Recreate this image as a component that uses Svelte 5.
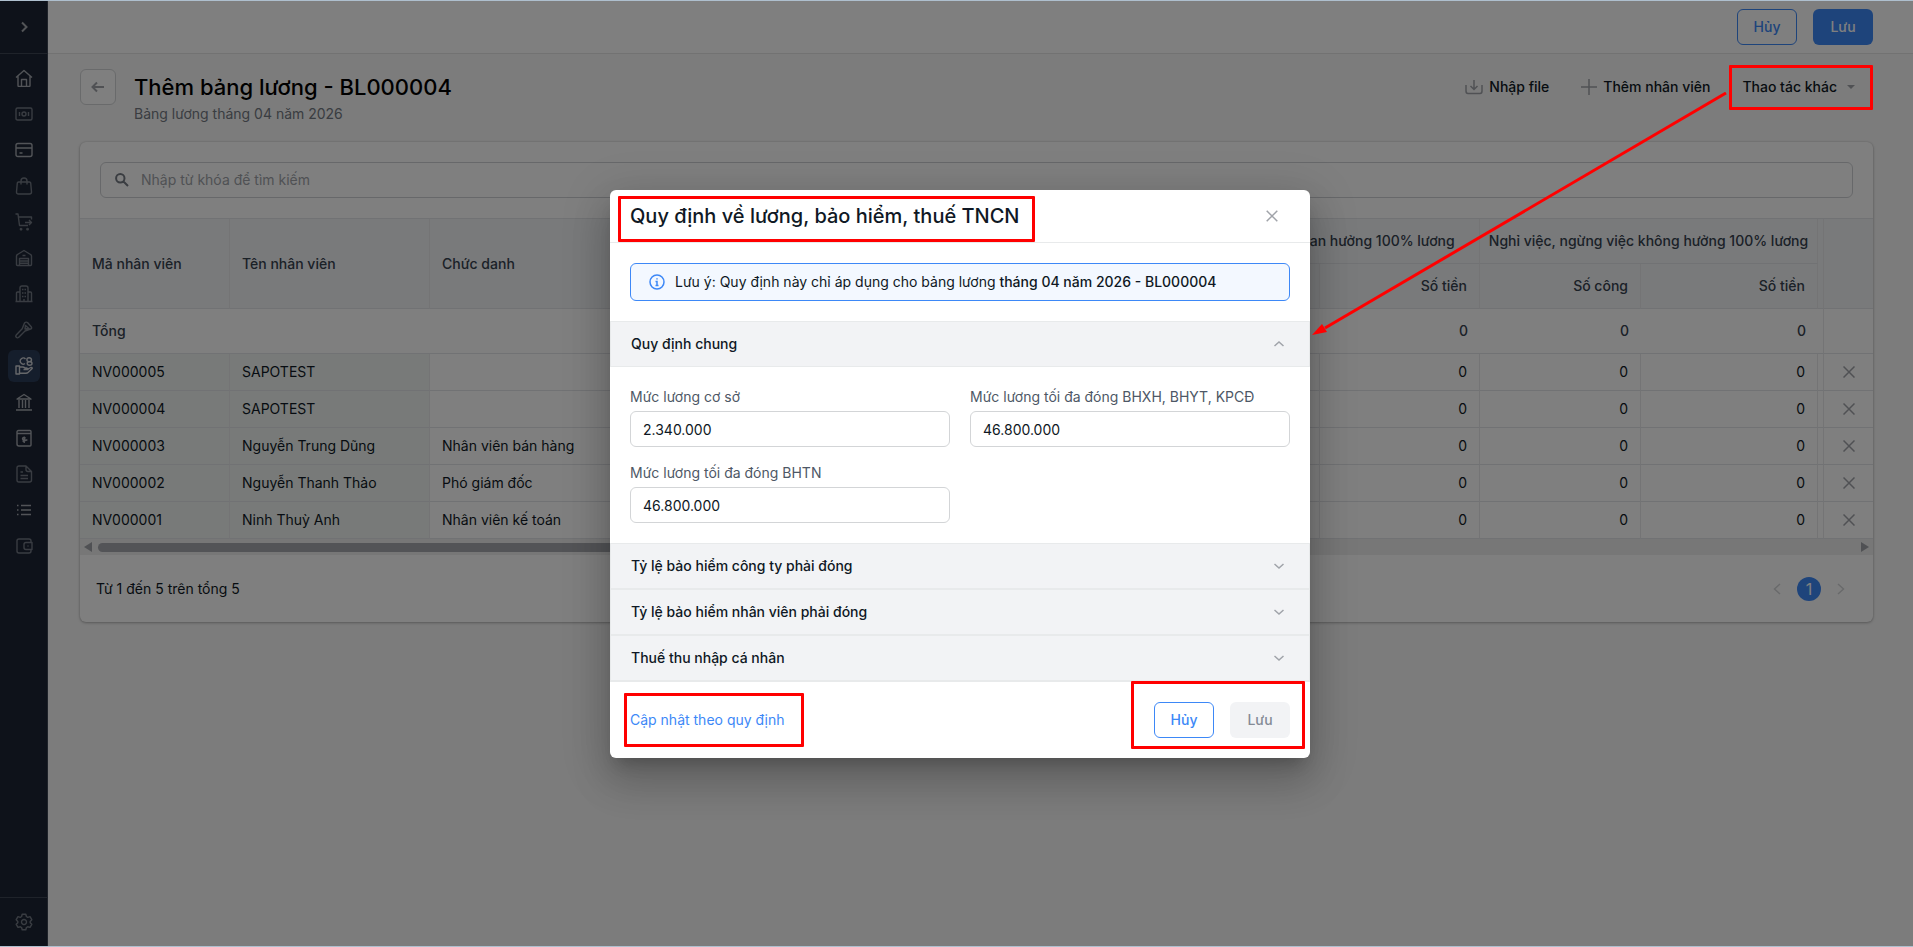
<script lang="ts">
  interface NavItem {
    label: string;
    d: string;
    strong?: boolean;
    active?: boolean;
  }

  interface Employee {
    code: string;
    name: string;
    title: string;
  }

  const navItems: NavItem[] = [
    { label: 'Trang chủ', strong: true, d: 'M1 8.5 9 1.5l8 7M3 7v9.500q0 1 1 1h10q1 0 1-1V7M6.500 17v-6.500h5V17' },
    { label: 'Thu chi', d: 'M2.500 3h13q1.500 0 1.500 1.500v9q0 1.500-1.500 1.500h-13q-1.500 0-1.500-1.500v-9q0-1.500 1.500-1.500zM4.500 7v4M13.500 7v4M11 9a2 2 0 1 1-4 0a2 2 0 1 1 4 0' },
    { label: 'Thẻ', strong: true, d: 'M3 2.500h12q2 0 2 2v9q0 2-2 2h-12q-2 0-2-2v-9q0-2 2-2zM1 7h16M4.500 12h3' },
    { label: 'Bán hàng', d: 'M3.500 5h11q1 0 1.200 1l.8 9q0 2-2 2h-11q-2 0-2-2l.8-9q.2-1 1.200-1zM6 7.500V4q0-3 3-3t3 3v3.500' },
    { label: 'Mua hàng', d: 'M.5 1h2.500l1.500 11.500h8.500M3.500 4h13v2.500M10 9.500h6.500M14 7l2.500 2.500L14 12M6 15.500a.7.7 0 1 0 .1 0M12.500 15.500a.7.7 0 1 0 .1 0' },
    { label: 'Kho', d: 'M2.500 5.500 9 1.500l6.500 4q1 .5 1 1.500v8.500q0 1-1 1h-13q-1 0-1-1V7q0-1 1-1.500zM4.500 16.500V9.500h9v7M4.500 12h9M4.500 14.300h9M7.500 6.500h3' },
    { label: 'Tài sản', d: 'M.5 16.500h17M5 16.500V3q0-2 2-2h4q2 0 2 2v13.500M5 7H2.500q-1 0-1 1v8.500M13 7h2.500q1 0 1 1v8.500M7 4.500h1.500M9.500 4.500h1.500M7 8h1.500M9.500 8h1.500M7 11.500h1.500M9.500 11.500h1.500M9 14v2.500' },
    { label: 'Công cụ', d: 'M9.500 2q1.500-1.500 3-.5l3.500 4q1.500 2-.5 2.500l-5.500 2-6.500 6.500q-1.200.8-2.200-.2t-.1-2.200l6-6.300zM10.500 4.500l3.500 3-4 .5z' },
    { label: 'Tiền lương', active: true, d: 'M1 9h3.500v8H1zM4.500 10h3q1.500 0 2.500 1h1.500q1.500.2 1.500 1.500H8.500M13 12l2.800-1.500q1.500-.2 1.400 1l-4.200 4q-.7.7-2 .7H4.500M10 6.500a3 3 0 1 1 .5-4.500M16.500 2.800a2.300 2 0 1 0-4.600 0a2.300 2 0 1 0 4.600 0M17 6.300a2.400 2 0 1 1-4.800 0q0-1.600 2.400-1.600t2.400 1.600' },
    { label: 'Ngân hàng', strong: true, d: 'M2 6 9 1.500 16 6zM4 7v8M7.500 7v8M10.500 7v8M14 7v8M1 17h16' },
    { label: 'Sổ quỹ', strong: true, d: 'M2 4.500V15q0 2 2 2h11q1 0 1-1V4.500zM2 4.500V3q0-1.500 1.500-1.500H15q1 0 1 1v2M10.700 9q-3.200-1-3.200.7t3.300 1.300-3.300 1.300M9.200 7.500v6.500' },
    { label: 'Chứng từ', d: 'M4 1h7l5.500 5.500V15q0 2-2 2H4q-2 0-2-2V3q0-2 2-2zM11 1v3.500q0 2 2 2h3.500M5.500 7h2.500M5.500 10.500h7.500M5.500 13.500h7.500' },
    { label: 'Danh mục', strong: true, d: 'M2 4.500h1.500M6 4.500h10M2 9h1.500M6 9h10M2 13.500h1.500M6 13.500h10' },
    { label: 'Ví', d: 'M16 5.500V4q0-2-2-2H4Q2 2 2 4v10q0 2 2 2h10q2 0 2-2v-1.500M17 5.500h-6q-2 0-2 2v3q0 2 2 2h6zM12.500 9h1' }
  ];

  const employees: Employee[] = [
    { code: 'NV000005', name: 'SAPOTEST', title: '' },
    { code: 'NV000004', name: 'SAPOTEST', title: '' },
    { code: 'NV000003', name: 'Nguyễn Trung Dũng', title: 'Nhân viên bán hàng' },
    { code: 'NV000002', name: 'Nguyễn Thanh Thảo', title: 'Phó giám đốc' },
    { code: 'NV000001', name: 'Ninh Thuỳ Anh', title: 'Nhân viên kế toán' }
  ];

  const closedSections = [
    'Tỷ lệ bảo hiểm công ty phải đóng',
    'Tỷ lệ bảo hiểm nhân viên phải đóng',
    'Thuế thu nhập cá nhân'
  ];

  let keyword = $state('');
  let generalOpen = $state(true);
  let baseSalary = $state('2.340.000');
  let maxSocial = $state('46.800.000');
  let maxUnemployment = $state('46.800.000');
</script>

{#snippet chevron(up: boolean)}
  <svg class="chevron" class:up width="12" height="12" viewBox="0 0 12 12"><path d="M1.500 4l4.500 4 4.500-4" /></svg>
{/snippet}

<div class="app">
  <aside class="sidebar">
    <button class="side-toggle" aria-label="Mở rộng menu">
      <svg width="12" height="12" viewBox="0 0 12 12"><path d="M4 1.500L8.500 6 4 10.500" /></svg>
    </button>
    <nav>
      {#each navItems as item}
        <a href="#{item.label}" class="nav-item" class:strong={item.strong} class:active={item.active} aria-label={item.label}>
          <svg width="18" height="18" viewBox="0 0 18 18"><path d={item.d} /></svg>
        </a>
      {/each}
    </nav>
    <div class="side-foot">
      <a href="#cau-hinh" class="nav-item" aria-label="Cấu hình">
        <svg width="18" height="18" viewBox="0 0 18 18">
          <path d="M7.200 1.200h3.600l.6 2.300 1.300.8 2.300-.7 1.800 3.100-1.600 1.700v1.300l1.600 1.600-1.800 3.100-2.300-.6-1.300.7-.6 2.300H7.200l-.6-2.300-1.300-.7-2.300.6-1.800-3.100 1.600-1.600V8.400L1.200 6.700 3 3.600l2.300.7 1.300-.8zM11.500 9a2.500 2.500 0 1 1-5 0a2.500 2.500 0 1 1 5 0" />
        </svg>
      </a>
    </div>
  </aside>

  <div class="content">
    <div class="topbar">
      <button class="btn outline">Hủy</button>
      <button class="btn primary">Lưu</button>
    </div>

    <main>
      <header class="page-head">
        <button class="back" aria-label="Quay lại">
          <svg width="14" height="12" viewBox="0 0 14 12"><path d="M13 6H2M6 1.500L1.500 6 6 10.500" /></svg>
        </button>
        <div class="titles">
          <h1>Thêm bảng lương - BL000004</h1>
          <p>Bảng lương tháng 04 năm 2026</p>
        </div>
        <div class="actions">
          <button class="action">
            <svg width="18" height="16" viewBox="0 0 18 16"><path d="M1 6v6q0 2.500 2 2.500h12q2 0 2-2.500V6M9 1v9M5.500 7L9 10.500 12.500 7" /></svg>
            Nhập file
          </button>
          <button class="action">
            <svg width="16" height="16" viewBox="0 0 16 16"><path d="M8 0v16M0 8h16" /></svg>
            Thêm nhân viên
          </button>
          <button class="action more">
            Thao tác khác
            <svg class="caret" width="8" height="4" viewBox="0 0 8 4"><path d="M0 0h8L4 4z" /></svg>
          </button>
        </div>
      </header>

      <section class="card">
        <label class="search">
          <svg width="14" height="14" viewBox="0 0 14 14"><path d="M9.500 5.300a4.200 4.200 0 1 1-8.400 0a4.200 4.200 0 1 1 8.400 0M8.500 8.500L13 13" /></svg>
          <input type="text" aria-label="Tìm kiếm" placeholder="Nhập từ khóa để tìm kiếm" bind:value={keyword} />
        </label>

        <table>
          <colgroup>
            <col class="c-code" />
            <col class="c-name" />
            <col />
            <col class="c-days-prev" />
            <col class="c-amount-prev" />
            <col class="c-days" />
            <col class="c-amount" />
            <col class="c-gap" />
            <col class="c-remove" />
          </colgroup>
          <thead>
            <tr>
              <th rowspan="2">Mã nhân viên</th>
              <th rowspan="2">Tên nhân viên</th>
              <th rowspan="2">Chức danh</th>
              <th colspan="2" class="group">Thời gian hưởng 100% lương</th>
              <th colspan="2" class="group">Nghỉ việc, ngừng việc không hưởng 100% lương</th>
              <th rowspan="2" class="gap"></th>
              <th rowspan="2"></th>
            </tr>
            <tr>
              <th class="num">Số công</th>
              <th class="num">Số tiền</th>
              <th class="num">Số công</th>
              <th class="num">Số tiền</th>
            </tr>
          </thead>
          <tbody>
            <tr class="total">
              <td colspan="3">Tổng</td>
              <td class="num">0</td>
              <td class="num">0</td>
              <td class="num">0</td>
              <td class="num">0</td>
              <td class="gap"></td>
              <td></td>
            </tr>
            {#each employees as employee (employee.code)}
              <tr>
                <td class="pinned">{employee.code}</td>
                <td class="pinned">{employee.name}</td>
                <td>{employee.title}</td>
                <td class="num">0</td>
                <td class="num">0</td>
                <td class="num">0</td>
                <td class="num">0</td>
                <td class="gap"></td>
                <td class="remove">
                  <button aria-label="Xóa {employee.code}">
                    <svg width="12" height="12" viewBox="0 0 12 12"><path d="M.5.5l11 11M11.500.5l-11 11" /></svg>
                  </button>
                </td>
              </tr>
            {/each}
          </tbody>
        </table>

        <div class="scrollbar">
          <svg width="8" height="10" viewBox="0 0 8 10"><path d="M8 0v10L0 5z" /></svg>
          <div class="track"><div class="thumb"></div></div>
          <svg width="8" height="10" viewBox="0 0 8 10"><path d="M0 0v10l8-5z" /></svg>
        </div>

        <footer class="card-foot">
          <span>Từ 1 đến 5 trên tổng 5</span>
          <div class="pager">
            <button aria-label="Trang trước"><svg width="8" height="12" viewBox="0 0 8 12"><path d="M7 1L1.500 6 7 11" /></svg></button>
            <button class="current">1</button>
            <button aria-label="Trang sau"><svg width="8" height="12" viewBox="0 0 8 12"><path d="M1 1l5.500 5L1 11" /></svg></button>
          </div>
        </footer>
      </section>
    </main>
  </div>

  <div class="overlay">
    <div class="modal" role="dialog" aria-modal="true" aria-labelledby="modal-title">
      <header class="modal-head">
        <h2 id="modal-title">Quy định về lương, bảo hiểm, thuế TNCN</h2>
        <button class="close" aria-label="Đóng">
          <svg width="12" height="12" viewBox="0 0 12 12"><path d="M.7.7l10.600 10.600M11.300.7L.7 11.300" /></svg>
        </button>
        <span class="mark mark-title"></span>
      </header>

      <div class="notice">
        <svg width="16" height="16" viewBox="0 0 16 16">
          <circle cx="8" cy="8" r="7" />
          <path d="M6.500 7.500H8v4M6.500 11.500h3M8 4.300v1.200" />
        </svg>
        <p>Lưu ý: Quy định này chỉ áp dụng cho bảng lương <strong>tháng 04 năm 2026 - BL000004</strong></p>
      </div>

      <button class="section" aria-expanded={generalOpen} onclick={() => (generalOpen = !generalOpen)}>
        Quy định chung
        {@render chevron(generalOpen)}
      </button>
      {#if generalOpen}
        <div class="fields">
          <label>
            <span>Mức lương cơ sở</span>
            <input type="text" bind:value={baseSalary} />
          </label>
          <label>
            <span>Mức lương tối đa đóng BHXH, BHYT, KPCĐ</span>
            <input type="text" bind:value={maxSocial} />
          </label>
          <label>
            <span>Mức lương tối đa đóng BHTN</span>
            <input type="text" bind:value={maxUnemployment} />
          </label>
        </div>
      {/if}
      {#each closedSections as section}
        <button class="section" aria-expanded="false">
          {section}
          {@render chevron(false)}
        </button>
      {/each}

      <footer class="modal-foot">
        <a href="#cap-nhat">Cập nhật theo quy định<span class="mark mark-link"></span></a>
        <div class="modal-buttons">
          <button class="btn outline">Hủy</button>
          <button class="btn disabled" disabled>Lưu</button>
          <span class="mark mark-buttons"></span>
        </div>
      </footer>
    </div>

    <!-- guide arrow from the "Thao tác khác" menu to the dialog -->
    <div class="mark mark-more"></div>
    <svg class="arrow" width="416" height="244" viewBox="0 0 416 244">
      <path d="M415 1L14 236" />
      <polygon points="1,243 11,232 16,240" />
    </svg>
  </div>
</div>

<style>
  :global(body) {
    margin: 0;
  }
  .app,
  .app :global(*) {
    box-sizing: border-box;
  }
  .app {
    position: relative;
    display: flex;
    min-height: 100vh;
    border-top: 1px solid #aebfce;
    border-bottom: 1px solid #aebfce;
    background: #f8f8f8;
    color: #0f1824;
    font-family: Inter, 'Noto Sans', sans-serif;
    font-size: 14px;
    line-height: 20px;
  }
  button,
  input {
    font: inherit;
    color: inherit;
  }
  button {
    padding: 0;
    border: 0;
    background: none;
    cursor: pointer;
  }
  svg {
    flex: none;
    fill: none;
    stroke: currentColor;
  }
  h1,
  h2,
  p {
    margin: 0;
    font-weight: 400;
  }

  .sidebar {
    display: flex;
    flex-direction: column;
    width: 48px;
    flex: none;
    background: #1c2534;
    border-right: 1px solid #3e4654;
  }
  .side-toggle {
    display: flex;
    align-items: center;
    justify-content: center;
    height: 53px;
    border-bottom: 1px solid #3e4654;
    color: #a5a8ae;
  }
  .side-toggle svg {
    stroke-width: 2;
  }
  nav {
    display: flex;
    flex-direction: column;
    gap: 4px;
    flex: 1;
    padding: 8px 7px 8px 8px;
  }
  .nav-item {
    display: flex;
    align-items: center;
    justify-content: center;
    width: 32px;
    height: 32px;
    border-radius: 6px;
    color: #737984;
  }
  .nav-item svg {
    stroke-width: 1.4;
    stroke-linejoin: round;
  }
  .nav-item.strong {
    color: #a5a9b0;
  }
  .nav-item.active {
    background: #2b3c58;
    color: #cdd0d5;
  }
  .side-foot {
    padding: 8px;
    border-top: 1px solid #3e4654;
  }

  .content {
    flex: 1;
    min-width: 0;
  }
  .topbar {
    display: flex;
    align-items: center;
    justify-content: flex-end;
    gap: 16px;
    height: 53px;
    padding: 0 40px;
    background: #fff;
    border-bottom: 1px solid #e4e4e4;
  }
  .btn {
    width: 60px;
    height: 36px;
    border-radius: 6px;
    font-weight: 500;
  }
  .btn.outline {
    border: 1px solid #3d88f7;
    background: #fff;
    color: #3d88f7;
  }
  .btn.primary {
    background: #3d88f7;
    color: #fff;
  }
  .btn.disabled {
    background: #f2f3f5;
    color: #858b95;
  }

  main {
    padding: 15px 40px 24px 32px;
  }
  .page-head {
    display: flex;
    margin-bottom: 19px;
  }
  .back {
    display: flex;
    align-items: center;
    justify-content: center;
    width: 36px;
    height: 36px;
    border: 1px solid #d3d5d7;
    border-radius: 6px;
    background: #fff;
    color: #a0a3a9;
  }
  .back svg {
    stroke-width: 2;
  }
  .titles {
    flex: 1;
    margin-left: 18px;
  }
  h1 {
    font-size: 22px;
    font-weight: 500;
    line-height: 36px;
    color: #000;
  }
  .titles p {
    line-height: 18px;
    color: #747a83;
  }
  .actions {
    display: flex;
    align-items: center;
    gap: 32px;
    height: 36px;
    padding-right: 18px;
  }
  .action {
    display: flex;
    align-items: center;
    gap: 6px;
    font-weight: 500;
  }
  .action svg {
    color: #a0a3a9;
    stroke-width: 1.5;
  }
  .action.more {
    gap: 10px;
  }
  .action .caret {
    fill: #a0a3a9;
    stroke: none;
  }

  .card {
    padding-top: 20px;
    border-radius: 6px;
    background: #fff;
    box-shadow: 0 0 2px rgba(0, 0, 0, 0.15), 0 1px 3px rgba(0, 0, 0, 0.25);
  }
  .search {
    display: flex;
    align-items: center;
    gap: 12px;
    height: 36px;
    margin: 0 20px 20px;
    padding: 0 14px;
    border: 1px solid #cfd1d4;
    border-radius: 6px;
    color: #747a83;
  }
  .search svg {
    stroke-width: 2;
  }
  .search input {
    flex: 1;
    border: 0;
    outline: 0;
    padding: 0;
    background: none;
  }
  .search input::placeholder {
    color: #a0a3a9;
    opacity: 1;
  }

  table {
    width: 100%;
    table-layout: fixed;
    border-collapse: separate;
    border-spacing: 0;
    border-top: 1px solid #e3e5e8;
  }
  .c-code {
    width: 150px;
  }
  .c-name {
    width: 200px;
  }
  .c-days-prev {
    width: 80px;
  }
  .c-amount-prev {
    width: 160px;
  }
  .c-days {
    width: 161px;
  }
  .c-amount {
    width: 177px;
  }
  .c-gap {
    width: 6px;
  }
  .c-remove {
    width: 49px;
  }
  th,
  td {
    height: 37px;
    padding: 0 12px;
    border-right: 1px solid #e8e9eb;
    border-bottom: 1px solid #e3e5e8;
    text-align: left;
    white-space: nowrap;
  }
  th {
    height: 45px;
    background: #f2f4f7;
    color: #37424f;
    font-weight: 500;
  }
  tr > :last-child:not(.num, .group) {
    border-right: 0;
  }
  th.group {
    text-align: center;
    padding: 0;
  }
  th.num,
  td.num {
    text-align: right;
  }
  th.gap,
  td.gap {
    padding: 0;
  }
  .pinned {
    background: #f1f5f3;
  }
  .total td {
    height: 45px;
    border-right: 0;
    color: #37424f;
    font-weight: 500;
  }
  .total td.gap {
    border-right: 1px solid #e8e9eb;
  }
  td.remove {
    padding: 0;
  }
  .remove button {
    display: flex;
    margin: 0 auto;
    color: #a0a3a9;
  }
  .remove svg {
    stroke-width: 1.5;
  }

  .scrollbar {
    display: flex;
    align-items: center;
    gap: 6px;
    height: 16px;
    padding: 0 4px;
    background: #eeefef;
  }
  .scrollbar svg {
    fill: #a0a3a9;
    stroke: none;
  }
  .track {
    flex: 1;
  }
  .thumb {
    width: 40%;
    height: 9px;
    border-radius: 5px;
    background: #a6a8af;
  }
  .card-foot {
    display: flex;
    align-items: center;
    justify-content: space-between;
    height: 67px;
    padding: 0 28px 0 16px;
  }
  .pager {
    display: flex;
    align-items: center;
    gap: 16px;
  }
  .pager button {
    display: flex;
    align-items: center;
    justify-content: center;
    height: 24px;
    min-width: 8px;
    color: #d3d5d7;
  }
  .pager .current {
    width: 24px;
    border-radius: 50%;
    background: #3d88f7;
    color: #fff;
    font-size: 16px;
  }
  .pager svg {
    stroke-width: 1.5;
  }

  .overlay {
    position: absolute;
    inset: 0;
    display: flex;
    align-items: center;
    justify-content: center;
    padding: 1px 0 0 7px;
    background: rgba(0, 0, 0, 0.5);
  }
  .modal {
    width: 700px;
    border-radius: 6px;
    background: #fff;
    box-shadow: 0 11px 15px -7px rgba(0, 0, 0, 0.2), 0 24px 38px 3px rgba(0, 0, 0, 0.14), 0 9px 46px 8px rgba(0, 0, 0, 0.12);
  }
  .modal-head {
    position: relative;
    display: flex;
    align-items: center;
    justify-content: space-between;
    height: 53px;
    padding: 0 32px 0 20px;
    border-bottom: 1px solid #e8eaeb;
  }
  h2 {
    font-size: 20px;
    font-weight: 500;
    line-height: 28px;
  }
  .close {
    display: flex;
    color: #a0a3a9;
  }
  .close svg {
    stroke-width: 1.5;
  }
  .notice {
    display: flex;
    align-items: center;
    gap: 10px;
    height: 38px;
    margin: 20px;
    padding: 0 18px;
    border: 1px solid #3d88f7;
    border-radius: 6px;
    background: #f3f8ff;
  }
  .notice svg {
    color: #3d88f7;
    stroke-width: 1.5;
  }
  .notice strong {
    font-weight: 500;
  }
  .section {
    display: flex;
    align-items: center;
    justify-content: space-between;
    width: 100%;
    height: 46px;
    padding: 0 24px 0 20px;
    border: 1px solid #e8eaeb;
    background: #f2f3f5;
    font-weight: 500;
  }
  .chevron {
    color: #a0a3a9;
    stroke-width: 1.5;
  }
  .chevron.up {
    transform: rotate(180deg);
  }
  .fields {
    display: grid;
    grid-template-columns: 1fr 1fr;
    gap: 16px 20px;
    padding: 20px;
  }
  .fields label {
    display: flex;
    flex-direction: column;
    gap: 4px;
    color: #4e5866;
  }
  .fields input {
    height: 36px;
    padding: 0 12px;
    border: 1px solid #d3d5d7;
    border-radius: 6px;
    background: #fff;
    color: #0f1824;
  }
  .modal-foot {
    display: flex;
    align-items: center;
    justify-content: space-between;
    padding: 20px;
    border-top: 1px solid #e8eaeb;
  }
  .modal-foot a {
    position: relative;
    color: #3d88f7;
    text-decoration: none;
  }
  .modal-buttons {
    position: relative;
    display: flex;
    gap: 16px;
  }

  /* red call-outs lie over the interface */
  .mark {
    position: absolute;
    border: 3px solid #f00;
    border-radius: 1px;
    pointer-events: none;
  }
  .mark-title {
    top: 6px;
    left: 8px;
    width: 417px;
    height: 46px;
  }
  .mark-link {
    inset: -17px -19px -17px -6px;
  }
  .mark-buttons {
    inset: -21px -15px -11px -23px;
  }
  .mark-more {
    top: 64px;
    right: 40px;
    width: 144px;
    height: 45px;
  }
  .arrow {
    position: absolute;
    top: 91px;
    right: 186px;
    color: #f00;
    stroke-width: 3;
    pointer-events: none;
  }
  .arrow polygon {
    fill: #f00;
    stroke: none;
  }
</style>
